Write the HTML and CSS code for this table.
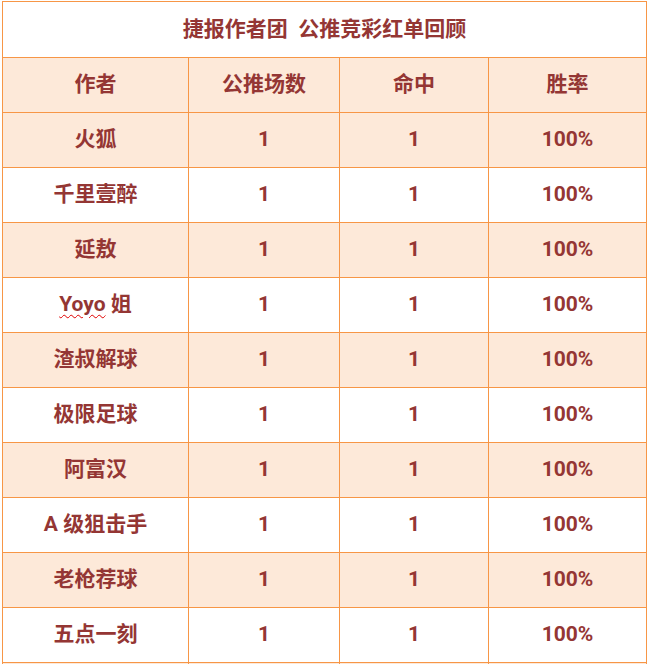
FILE: index.html
```html
<!DOCTYPE html>
<html lang="zh-CN">
<head>
<meta charset="utf-8">
<link rel="stylesheet" href="styles.css">
</head>
<body>
<table class="report">
  <colgroup>
    <col class="c1"><col class="c2"><col class="c3"><col class="c4">
  </colgroup>
  <tr class="title"><td colspan="4">捷报作者团&nbsp; 公推竞彩红单回顾</td></tr>
  <tr class="shade"><td>作者</td><td>公推场数</td><td>命中</td><td>胜率</td></tr>
  <tr class="shade"><td>火狐</td><td>1</td><td>1</td><td>100%</td></tr>
  <tr><td>千里壹醉</td><td>1</td><td>1</td><td>100%</td></tr>
  <tr class="shade"><td>延敖</td><td>1</td><td>1</td><td>100%</td></tr>
  <tr><td><span class="spell">Yoyo</span> 姐</td><td>1</td><td>1</td><td>100%</td></tr>
  <tr class="shade"><td>渣叔解球</td><td>1</td><td>1</td><td>100%</td></tr>
  <tr><td>极限足球</td><td>1</td><td>1</td><td>100%</td></tr>
  <tr class="shade"><td>阿富汉</td><td>1</td><td>1</td><td>100%</td></tr>
  <tr><td>A 级狙击手</td><td>1</td><td>1</td><td>100%</td></tr>
  <tr class="shade"><td>老枪荐球</td><td>1</td><td>1</td><td>100%</td></tr>
  <tr><td>五点一刻</td><td>1</td><td>1</td><td>100%</td></tr>
  <tr class="shade"><td>&nbsp;</td><td></td><td></td><td></td></tr>
</table>
</body>
</html>
```
FILE: styles.css
```css
html, body {
  margin: 0;
  padding: 0;
  background: #ffffff;
}
body {
  padding: 1px 0 0 2px;
  overflow: hidden;
  height: 663px;
}
.report {
  border-collapse: collapse;
  table-layout: fixed;
  width: 644px;
  font-family: Roboto, "Noto Sans CJK SC", sans-serif;
  font-weight: bold;
  font-size: 21px;
  color: #943634;
}
.c1 { width: 186px; }
.c2 { width: 151px; }
.c3 { width: 149px; }
.c4 { width: 158px; }
.report td {
  border: 1px solid #f79646;
  text-align: center;
  vertical-align: middle;
  height: 55px;
  padding: 0 0 2px 0;
  box-sizing: border-box;
  line-height: 24px;
}
.report .title td {
  height: 56px;
}
.shade td {
  background: #fde9d9;
}
.spell {
  text-decoration: underline wavy #e00000;
  text-decoration-thickness: 1px;
  text-underline-offset: 3px;
}
```
